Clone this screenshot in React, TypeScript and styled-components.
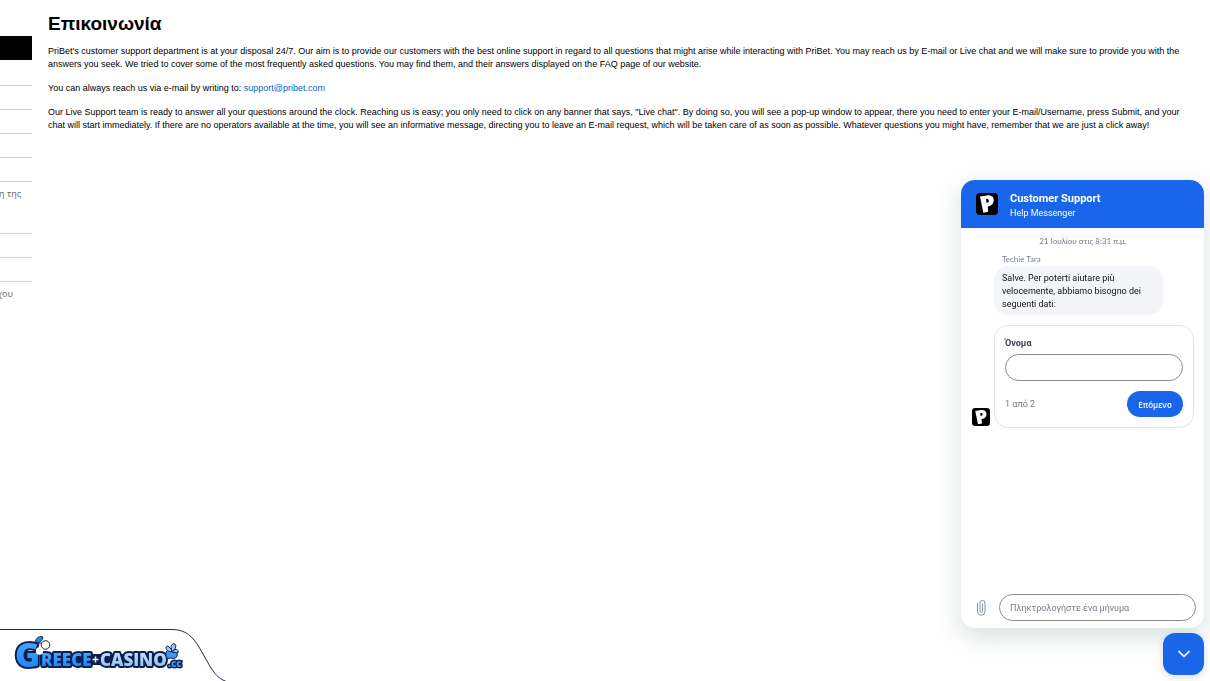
import React from "react";
import styled, { createGlobalStyle } from "styled-components";

const BLUE = "#1a66ea";
const UI = `"Open Sans", "Noto Sans", sans-serif`;
const UI_NARROW = `Roboto, "Noto Sans", sans-serif`;
const CAPTION = `Lato, "Noto Sans", sans-serif`;

const GlobalStyle = createGlobalStyle`
  *, *::before, *::after { box-sizing: border-box; }
  body {
    margin: 0;
    min-height: 100vh;
    overflow-x: hidden;
    background: #fff;
    color: #000;
    font-family: "Liberation Sans", Arial, sans-serif;
  }
`;

const Page = styled.div`
  display: flex;
  align-items: flex-start;
  min-height: 100vh;
`;

const SideNav = styled.nav`
  flex: 0 0 auto;
  width: 32px;
  padding-top: 36px;
`;

const NavList = styled.ul`
  margin: 0;
  padding: 0;
  list-style: none;
`;

const NavItem = styled.li<{ $active?: boolean; $tall?: boolean }>`
  height: ${(p) => (p.$tall ? 52 : 24)}px;
  margin-bottom: ${(p) => (p.$active ? 2 : 0)}px;
  border-bottom: 1px solid ${(p) => (p.$active ? "#000" : "#d2d2d2")};
  background: ${(p) => (p.$active ? "#000" : "transparent")};
  &:last-child { border-bottom: 0; }
`;

const NavLink = styled.a<{ $inset: number }>`
  display: flex;
  justify-content: flex-end;
  overflow: hidden;
  padding: 6px ${(p) => p.$inset}px 0 0;
  color: #666;
  font: 9px/12px ${UI};
  text-decoration: none;
  white-space: nowrap;
`;

const Content = styled.main`
  flex: 1;
  min-width: 0;
  padding: 12px 30px 24px 16px;
`;

const Title = styled.h1`
  margin: 0 0 10px;
  font-size: 19px;
  line-height: 23px;
`;

const Paragraph = styled.p`
  margin: 0 0 11px;
  font-size: 9px;
  line-height: 13px;
`;

const MailLink = styled.a`
  color: #0b63c5;
  text-decoration: none;
`;

const SiteBadge = styled.a`
  position: fixed;
  left: 0;
  bottom: 0;
  display: block;
  line-height: 0;
`;

const Widget = styled.aside`
  position: fixed;
  right: 6px;
  bottom: 6px;
  display: flex;
  flex-direction: column;
  align-items: flex-end;
  gap: 5px;
  font-family: ${UI};
`;

const Panel = styled.section`
  display: flex;
  flex-direction: column;
  width: 243px;
  height: 448px;
  overflow: hidden;
  border-radius: 14px;
  background: #fff;
  box-shadow: 0 8px 24px rgba(20, 75, 75, 0.18);
`;

const PanelHeader = styled.header`
  display: flex;
  flex: 0 0 48px;
  align-items: center;
  gap: 12px;
  padding: 0 15px;
  background: ${BLUE};
  color: #fff;
`;

const HeaderText = styled.div`
  padding-top: 3px;
`;

const HeaderTitle = styled.h2`
  margin: 0;
  font: 700 11px/14px ${UI_NARROW};
`;

const HeaderSub = styled.p`
  margin: 0;
  font: 9px/14px ${UI_NARROW};
`;

const Messages = styled.div`
  display: flex;
  flex: 1;
  flex-direction: column;
  padding: 7px 10px 0 11px;
`;

const DateLine = styled.time`
  color: #737c88;
  font: 8px/12px ${CAPTION};
  text-align: center;
`;

const Sender = styled.div`
  margin: 6px 0 1px 30px;
  color: #737c88;
  font: 8px/12px ${CAPTION};
`;

const Bubble = styled.p`
  width: 169px;
  margin: 0 0 10px 22px;
  padding: 6px 8px 4px;
  border-radius: 14px;
  background: #f3f5f8;
  color: #111;
  font: 9px/13px ${UI_NARROW};
`;

const FormRow = styled.div`
  display: flex;
  align-items: flex-end;
  gap: 4px;
`;

const Avatar = styled.span`
  padding-bottom: 2px;
  line-height: 0;
`;

const Card = styled.form`
  flex: 1;
  padding: 10px;
  border: 1px solid #e2e4e7;
  border-radius: 14px;
`;

const FieldLabel = styled.label`
  display: block;
  margin-bottom: 4px;
  color: #3c434d;
  font: 700 9px/14px ${UI_NARROW};
`;

const TextField = styled.input`
  display: block;
  width: 100%;
  height: 27px;
  padding: 0 10px;
  border: 1px solid #8b8b8b;
  border-radius: 14px;
  background: #fff;
  font: 9px/13px ${UI_NARROW};
  outline: none;
  &::placeholder { color: #757d88; opacity: 1; }
`;

const CardFooter = styled.div`
  display: flex;
  align-items: center;
  justify-content: space-between;
  margin-top: 10px;
`;

const Step = styled.span`
  color: #737c88;
  font: 9px/13px ${UI_NARROW};
`;

const NextButton = styled.button`
  width: 56px;
  height: 26px;
  padding: 0;
  border: 0;
  border-radius: 13px;
  background: ${BLUE};
  color: #fff;
  font: 600 8px/13px ${UI};
`;

const Composer = styled.form`
  display: flex;
  align-items: center;
  gap: 12px;
  padding: 0 8px 7px 15px;
`;

const AttachButton = styled.button`
  display: flex;
  padding: 0;
  border: 0;
  background: none;
`;

const Launcher = styled.button`
  display: grid;
  place-items: center;
  width: 41px;
  height: 42px;
  padding: 0;
  border: 0;
  border-radius: 12px;
  background: ${BLUE};
  box-shadow: 0 2px 8px rgba(20, 75, 75, 0.18);
`;

function BrandMark({ size }: { size: number }) {
  return (
    <svg width={size} height={size} viewBox="0 0 22 22" aria-hidden="true">
      <rect width="22" height="22" rx="4" fill="#000" />
      <path
        fillRule="evenodd"
        fill="#fff"
        d="M4 3.600 11 2.400C15.400 1.800 18 4.200 17.700 7.800 17.400 11.400 14.800 13.200 11.700 13.400L12.200 18.800 7.300 19.800ZM10 6.200 10.500 9.800C12 9.800 13 9 12.900 7.700 12.800 6.400 11.600 5.800 10 6.200Z"
      />
    </svg>
  );
}

function SiteLogo() {
  return (
    <svg width="230" height="53" viewBox="0 628 230 53" role="img" aria-label="Greece-Casino.cc">
      <defs>
        <linearGradient id="deep" x1="0" y1="0" x2="0" y2="1">
          <stop offset="0" stopColor="#58adff" />
          <stop offset="0.6" stopColor="#2b93ff" />
          <stop offset="1" stopColor="#0f78f0" />
        </linearGradient>
        <linearGradient id="pale" x1="0" y1="0" x2="0" y2="1">
          <stop offset="0" stopColor="#d6eaff" />
          <stop offset="1" stopColor="#7fb9f8" />
        </linearGradient>
      </defs>
      <path
        d="M-1 629.500H172C186 629.500 193 637 199 647L211 668C216 676 221 680 228 682H-1Z"
        fill="#fff"
        stroke="#1c2a55"
      />
      <rect x="40" y="654" width="124" height="11" fill="#0d1f4d" />
      <g
        fontFamily="'Open Sans', 'Liberation Sans', sans-serif"
        fontWeight="800"
        stroke="#0d1f4d"
        strokeLinejoin="round"
        paintOrder="stroke"
      >
        <text x="41" y="666" fontSize="17" strokeWidth="4" fill="url(#deep)">REECE</text>
        <text x="100" y="666" fontSize="17" strokeWidth="4" fill="url(#pale)">CASINO</text>
        <text x="168" y="667" fontSize="10" strokeWidth="3" fill="#3f97f5">.cc</text>
        <text x="15" y="667" fontSize="34" strokeWidth="4" fill="url(#deep)">G</text>
      </g>
      <path d="M92.500 659.500H98.500M95.500 656.500V662.500" stroke="#e6f1ff" strokeWidth="1.500" />
      <path
        d="M35.500 641C36.500 637 40 636 43 637 42 641 39.500 643 36.500 643Z"
        fill="#2486ee"
        stroke="#0d1f4d"
      />
      <path d="M36 643C39 642 42 644 43 643M37 643C39 645 38 647 38.500 649" fill="none" stroke="#0d1f4d" />
      <circle cx="45.500" cy="645" r="4.300" fill="#fff" stroke="#0d1f4d" />
      <circle cx="39.500" cy="651" r="3.700" fill="#fff" />
      <g stroke="#0d1f4d">
        <path d="M166 655C165 650 169 649 171 652 174 649 178 651 177 655 178 658 173 659 171 658 168 659 166 658 166 655Z" fill="#3f97f5" />
        <path d="M171 652C165 651 165 646 168 646L172 650ZM172 651C170 646 172 643 175 644 177 646 175 650 172 652ZM172 652C175 648 179 649 178 653Z" fill="#9cc9fb" />
      </g>
    </svg>
  );
}

type Entry = { text?: string; inset?: number; active?: boolean; tall?: boolean };

const entries: Entry[] = [
  { active: true },
  {},
  {},
  {},
  {},
  {},
  { text: "ση της", inset: 11, tall: true },
  {},
  {},
  { text: "χου", inset: 19, tall: true },
];

export default function App() {
  return (
    <>
      <GlobalStyle />
      <Page>
        <SideNav>
          <NavList>
            {entries.map((e, i) => (
              <NavItem key={i} $active={e.active} $tall={e.tall}>
                {e.text && <NavLink href="#" $inset={e.inset ?? 0}>{e.text}</NavLink>}
              </NavItem>
            ))}
          </NavList>
        </SideNav>
        <Content>
          <Title>Επικοινωνία</Title>
          <Paragraph>
            PriBet's customer support department is at your disposal 24/7. Our aim is to provide our customers with the
            best online support in regard to all questions that might arise while interacting with PriBet. You may reach
            us by E-mail or Live chat and we will make sure to provide you with the answers you seek. We tried to cover
            some of the most frequently asked questions. You may find them, and their answers displayed on the FAQ page
            of our website.
          </Paragraph>
          <Paragraph>
            You can always reach us via e-mail by writing to:{" "}
            <MailLink href="mailto:support@pribet.com">support@pribet.com</MailLink>
          </Paragraph>
          <Paragraph>
            Our Live Support team is ready to answer all your questions around the clock. Reaching us is easy; you only
            need to click on any banner that says, "Live chat". By doing so, you will see a pop-up window to appear,
            there you need to enter your E-mail/Username, press Submit, and your chat will start immediately. If there
            are no operators available at the time, you will see an informative message, directing you to leave an E-mail
            request, which will be taken care of as soon as possible. Whatever questions you might have, remember that we
            are just a click away!
          </Paragraph>
        </Content>
      </Page>

      <SiteBadge href="#">
        <SiteLogo />
      </SiteBadge>

      <Widget>
        <Panel>
          <PanelHeader>
            <BrandMark size={22} />
            <HeaderText>
              <HeaderTitle>Customer Support</HeaderTitle>
              <HeaderSub>Help Messenger</HeaderSub>
            </HeaderText>
          </PanelHeader>
          <Messages>
            <DateLine>21 Ιουλίου στις 8:31 π.μ.</DateLine>
            <Sender>Techie Tara</Sender>
            <Bubble>Salve. Per poterti aiutare più velocemente, abbiamo bisogno dei seguenti dati:</Bubble>
            <FormRow>
              <Avatar>
                <BrandMark size={18} />
              </Avatar>
              <Card onSubmit={(e) => e.preventDefault()}>
                <FieldLabel htmlFor="name">Όνομα</FieldLabel>
                <TextField id="name" />
                <CardFooter>
                  <Step>1 από 2</Step>
                  <NextButton type="submit">Επόμενο</NextButton>
                </CardFooter>
              </Card>
            </FormRow>
          </Messages>
          <Composer onSubmit={(e) => e.preventDefault()}>
            <AttachButton type="button" aria-label="Επισύναψη">
              <svg width="11" height="18" viewBox="0 0 11 18" fill="none" stroke="#8290a0" strokeLinecap="round">
                <path d="M1.500 4.500V12.500A3.700 3.700 0 0 0 9 12.500V4A2.500 2.500 0 0 0 4 4V12A1.300 1.300 0 0 0 6.600 12V5" />
              </svg>
            </AttachButton>
            <TextField aria-label="Μήνυμα" placeholder="Πληκτρολογήστε ένα μήνυμα" />
          </Composer>
        </Panel>
        <Launcher type="button" aria-label="Κλείσιμο συνομιλίας">
          <svg width="14" height="10" viewBox="0 0 14 10" fill="none" stroke="#fff" strokeWidth="1.700" strokeLinecap="round" strokeLinejoin="round">
            <path d="M2 2.500 7 7.500 12 2.500" />
          </svg>
        </Launcher>
      </Widget>
    </>
  );
}
